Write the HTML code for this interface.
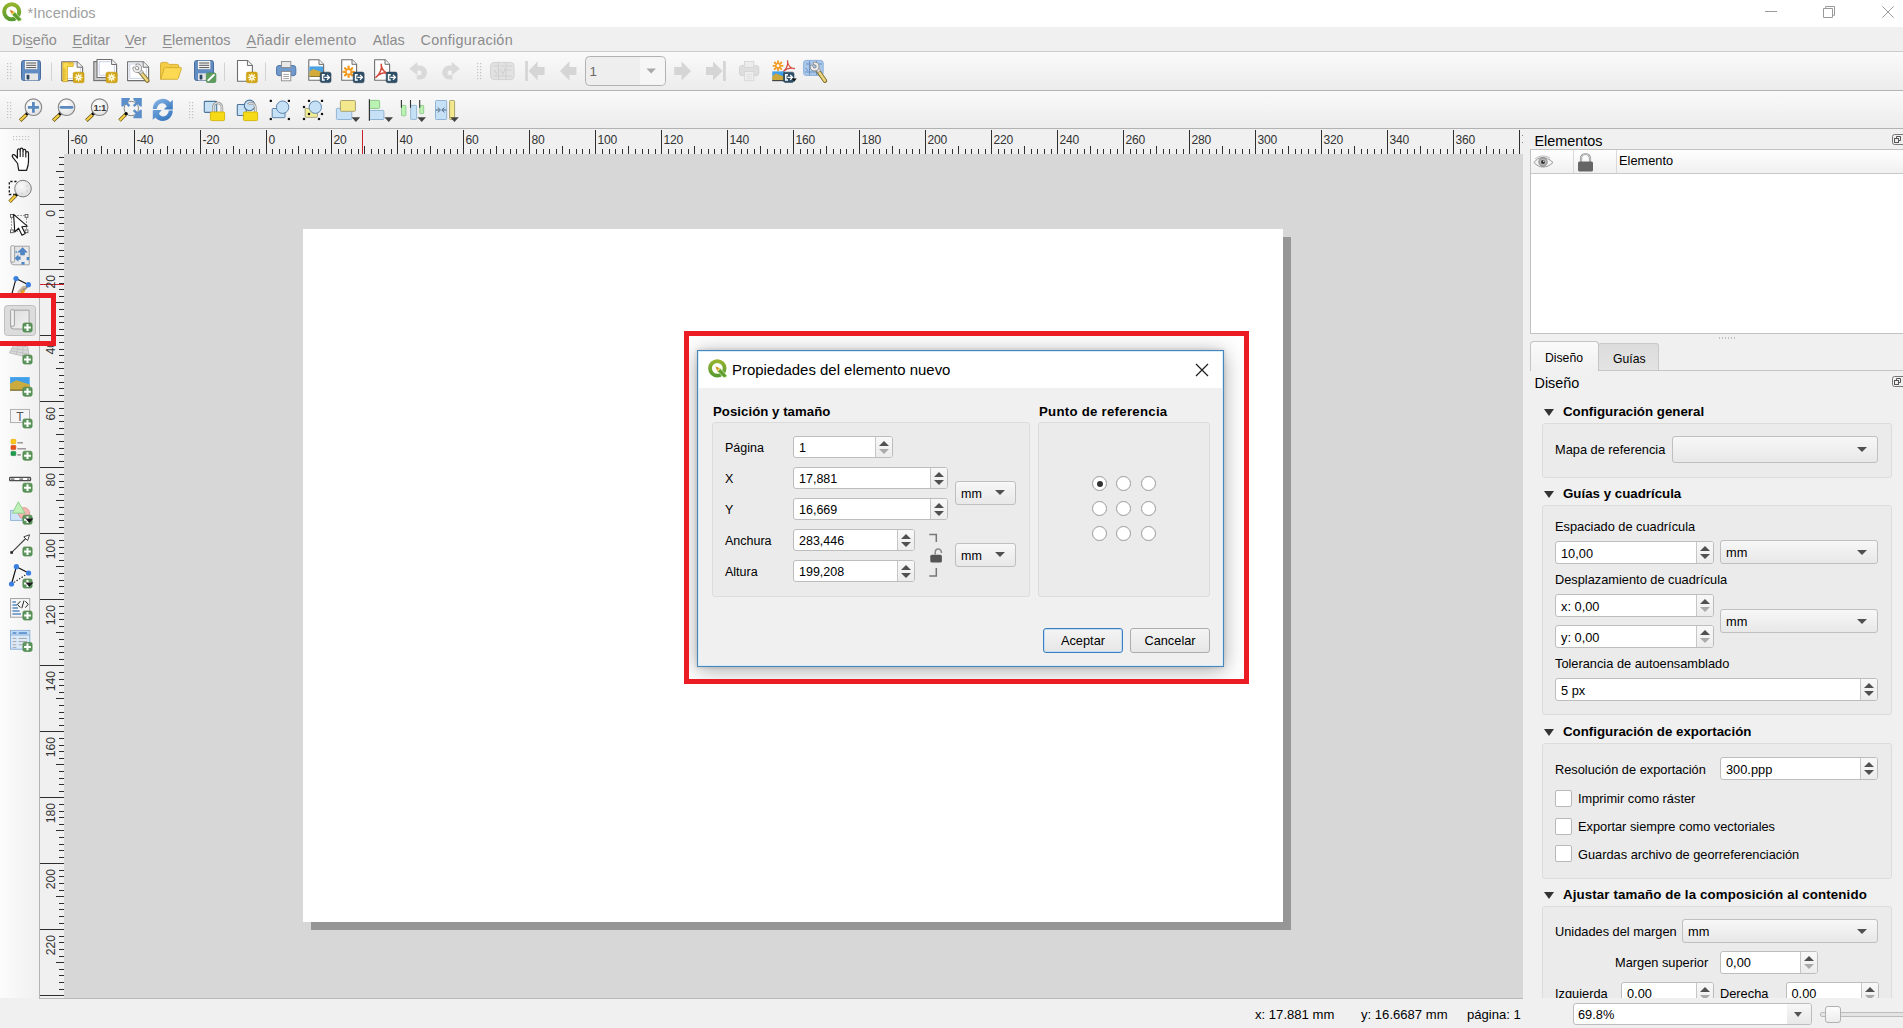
<!DOCTYPE html>
<html lang="es">
<head>
<meta charset="utf-8">
<title>*Incendios</title>
<style>
*{box-sizing:border-box;margin:0;padding:0}
html,body{width:1903px;height:1028px;overflow:hidden;background:#f0f0f0;font-family:"Liberation Sans",sans-serif;font-size:13px;color:#000}
.abs{position:absolute}
#app{position:relative;width:1903px;height:1028px;overflow:hidden}
#titlebar{left:0;top:0;width:1903px;height:27px;background:#fff}
#title{left:27.5px;top:3px;font-size:14.6px;line-height:20px;color:#a0a0a0;white-space:nowrap}
#menubar{left:0;top:27px;width:1903px;height:24px;background:#f0f0f0}
.mi{position:absolute;top:30.5px;font-size:14.4px;line-height:19px;color:#8c8c8c;white-space:nowrap}
.mi u{text-decoration:underline;text-underline-offset:2px;text-decoration-thickness:1px}
.tb{left:0;width:1903px;background:linear-gradient(#fafafa,#ececec)}
#tb1{top:51px;height:40px;border-top:1px solid #cbcbcb;border-bottom:1px solid #b5b5b5}
#tb2{top:91px;height:38px;border-bottom:1px solid #b2b2b2}
.ico{position:absolute;width:24px;height:24px;overflow:visible}
.hdl{position:absolute;width:5px;background-image:radial-gradient(circle,#b9b9b9 0.7px,transparent 1px);background-size:3px 3px}
.vsep{position:absolute;width:1px;background:#d0d0d0}
#ltb{left:0;top:129px;width:39px;height:869px;background:linear-gradient(90deg,#fcfcfc,#f0f0f0)}
#lsep{left:39px;top:129px;width:1px;height:869px;background:#b4b4b4}
#canvas{left:64px;top:154px;width:1459px;height:844px;background:#d7d7d7}
#pshadow{left:311px;top:237px;width:980px;height:693px;background:#969696}
#page{left:303px;top:229px;width:980px;height:693px;background:#fff}
#hruler{left:40px;top:129px;width:1483px;height:25px;background:#f0f0f0}
#vruler{left:40px;top:154px;width:24px;height:844px;background:#f0f0f0}
.rl{position:absolute;font-size:12.1px;letter-spacing:-.25px;line-height:12px;color:#333;white-space:nowrap}
.rlv{position:absolute;font-size:12.2px;line-height:12px;color:#333;white-space:nowrap;transform-origin:0 0;transform:rotate(-90deg)}
#status{left:0;top:998px;width:1903px;height:30px;background:#f0f0f0}
.st{position:absolute;top:1007px;font-size:12.6px;line-height:16px;white-space:nowrap;color:#000}
.red{position:absolute;border:5px solid #ec1c24}
</style>
</head>
<body>
<div id="app">
<div class="abs" id="titlebar"></div>
<div class="abs" id="title">*Incendios</div>
<svg class="abs" style="left:0px;top:0px" width="24" height="24" viewBox="0 0 24 24"><defs><linearGradient id="qg1" x1="0" y1="0" x2="0" y2="1"><stop offset="0" stop-color="#93b32e"/><stop offset="1" stop-color="#579a2f"/></linearGradient></defs><circle cx="11.7" cy="11.75" r="7.55" fill="none" stroke="url(#qg1)" stroke-width="3.9"/><path d="M10 10L14.8 12L21.3 18.8V20.5L18.4 21.3L12 14.8Z" fill="#5d9b30" stroke="#d6f3ae" stroke-width=".8" stroke-linejoin="round"/><path d="M13.4 11.4L14.9 12.3L12.3 14.9L11.4 13.4Z" fill="#f4d262"/><path d="M9.9 9.9L13.5 11.3L11.3 13.5Z" fill="#e67f22"/></svg>
<svg class="abs" style="left:1760px;top:0" width="143" height="27" viewBox="1760 0 143 27"><path d="M1765 11.5H1777M1823.5 8.5H1832.5V17.5H1823.5ZM1825.7 8.3V6.5H1834.5V15.3H1832.7M1882.3 6.3L1893.7 17.7M1893.7 6.3L1882.3 17.7" fill="none" stroke="#9a9a9a" stroke-width="1"/></svg>
<div class="abs" id="menubar"></div>
<div class="mi" style="left:12px">Di<u>s</u>eño</div>
<div class="mi" style="left:72.4px"><u>E</u>ditar</div>
<div class="mi" style="left:125px"><u>V</u>er</div>
<div class="mi" style="left:162.5px"><u>E</u>lementos</div>
<div class="mi" style="left:246.5px;letter-spacing:0.35px"><u>A</u>ñadir elemento</div>
<div class="mi" style="left:372.7px">Atlas</div>
<div class="mi" style="left:420.5px;letter-spacing:0.28px">Configuración</div>
<div class="abs tb" id="tb1"></div>
<div class="abs tb" id="tb2"></div>
<div class="abs" id="ltb"></div>
<div class="abs" id="lsep"></div>
<div class="abs" id="canvas"></div>
<div class="abs" id="pshadow"></div>
<div class="abs" id="page"></div>
<div class="abs" id="hruler"></div>
<div class="abs" id="vruler"></div>
<div class="abs" style="left:39px;top:998px;width:1484px;height:1px;background:#b9b9b9"></div>
<svg class="abs" style="left:0;top:0" width="1903" height="1028" shape-rendering="crispEdges"><path d="M68.5 130V154M74.5 149V154M81.5 149V154M87.5 149V154M94.5 149V154M101.5 146V154M107.5 149V154M114.5 149V154M120.5 149V154M127.5 149V154M134.5 130V154M140.5 149V154M147.5 149V154M153.5 149V154M160.5 149V154M167.5 146V154M173.5 149V154M180.5 149V154M186.5 149V154M193.5 149V154M200.5 130V154M206.5 149V154M213.5 149V154M219.5 149V154M226.5 149V154M233.5 146V154M239.5 149V154M246.5 149V154M252.5 149V154M259.5 149V154M266.5 130V154M272.5 149V154M279.5 149V154M285.5 149V154M292.5 149V154M298.5 146V154M305.5 149V154M312.5 149V154M318.5 149V154M325.5 149V154M331.5 130V154M338.5 149V154M345.5 149V154M351.5 149V154M358.5 149V154M364.5 146V154M371.5 149V154M378.5 149V154M384.5 149V154M391.5 149V154M397.5 130V154M404.5 149V154M411.5 149V154M417.5 149V154M424.5 149V154M430.5 146V154M437.5 149V154M444.5 149V154M450.5 149V154M457.5 149V154M463.5 130V154M470.5 149V154M477.5 149V154M483.5 149V154M490.5 149V154M496.5 146V154M503.5 149V154M510.5 149V154M516.5 149V154M523.5 149V154M529.5 130V154M536.5 149V154M543.5 149V154M549.5 149V154M556.5 149V154M562.5 146V154M569.5 149V154M576.5 149V154M582.5 149V154M589.5 149V154M595.5 130V154M602.5 149V154M609.5 149V154M615.5 149V154M622.5 149V154M628.5 146V154M635.5 149V154M642.5 149V154M648.5 149V154M655.5 149V154M661.5 130V154M668.5 149V154M675.5 149V154M681.5 149V154M688.5 149V154M694.5 146V154M701.5 149V154M708.5 149V154M714.5 149V154M721.5 149V154M727.5 130V154M734.5 149V154M741.5 149V154M747.5 149V154M754.5 149V154M760.5 146V154M767.5 149V154M774.5 149V154M780.5 149V154M787.5 149V154M793.5 130V154M800.5 149V154M807.5 149V154M813.5 149V154M820.5 149V154M826.5 146V154M833.5 149V154M840.5 149V154M846.5 149V154M853.5 149V154M859.5 130V154M866.5 149V154M873.5 149V154M879.5 149V154M886.5 149V154M892.5 146V154M899.5 149V154M906.5 149V154M912.5 149V154M919.5 149V154M925.5 130V154M932.5 149V154M938.5 149V154M945.5 149V154M952.5 149V154M958.5 146V154M965.5 149V154M971.5 149V154M978.5 149V154M985.5 149V154M991.5 130V154M998.5 149V154M1004.5 149V154M1011.5 149V154M1018.5 149V154M1024.5 146V154M1031.5 149V154M1037.5 149V154M1044.5 149V154M1051.5 149V154M1057.5 130V154M1064.5 149V154M1070.5 149V154M1077.5 149V154M1084.5 149V154M1090.5 146V154M1097.5 149V154M1103.5 149V154M1110.5 149V154M1117.5 149V154M1123.5 130V154M1130.5 149V154M1136.5 149V154M1143.5 149V154M1150.5 149V154M1156.5 146V154M1163.5 149V154M1169.5 149V154M1176.5 149V154M1183.5 149V154M1189.5 130V154M1196.5 149V154M1202.5 149V154M1209.5 149V154M1216.5 149V154M1222.5 146V154M1229.5 149V154M1235.5 149V154M1242.5 149V154M1249.5 149V154M1255.5 130V154M1262.5 149V154M1268.5 149V154M1275.5 149V154M1282.5 149V154M1288.5 146V154M1295.5 149V154M1301.5 149V154M1308.5 149V154M1315.5 149V154M1321.5 130V154M1328.5 149V154M1334.5 149V154M1341.5 149V154M1348.5 149V154M1354.5 146V154M1361.5 149V154M1367.5 149V154M1374.5 149V154M1381.5 149V154M1387.5 130V154M1394.5 149V154M1400.5 149V154M1407.5 149V154M1414.5 149V154M1420.5 146V154M1427.5 149V154M1433.5 149V154M1440.5 149V154M1447.5 149V154M1453.5 130V154M1460.5 149V154M1466.5 149V154M1473.5 149V154M1480.5 149V154M1486.5 146V154M1493.5 149V154M1499.5 149V154M1506.5 149V154M1513.5 149V154M1519.5 130V154M59 157.5H64M59 164.5H64M56 171.5H64M59 177.5H64M59 184.5H64M59 190.5H64M59 197.5H64M40 204.5H64M59 210.5H64M59 217.5H64M59 223.5H64M59 230.5H64M56 236.5H64M59 243.5H64M59 250.5H64M59 256.5H64M59 263.5H64M40 269.5H64M59 276.5H64M59 283.5H64M59 289.5H64M59 296.5H64M56 302.5H64M59 309.5H64M59 316.5H64M59 322.5H64M59 329.5H64M40 335.5H64M59 342.5H64M59 349.5H64M59 355.5H64M59 362.5H64M56 368.5H64M59 375.5H64M59 382.5H64M59 388.5H64M59 395.5H64M40 401.5H64M59 408.5H64M59 415.5H64M59 421.5H64M59 428.5H64M56 434.5H64M59 441.5H64M59 448.5H64M59 454.5H64M59 461.5H64M40 467.5H64M59 474.5H64M59 481.5H64M59 487.5H64M59 494.5H64M56 500.5H64M59 507.5H64M59 514.5H64M59 520.5H64M59 527.5H64M40 533.5H64M59 540.5H64M59 547.5H64M59 553.5H64M59 560.5H64M56 566.5H64M59 573.5H64M59 580.5H64M59 586.5H64M59 593.5H64M40 599.5H64M59 606.5H64M59 613.5H64M59 619.5H64M59 626.5H64M56 632.5H64M59 639.5H64M59 646.5H64M59 652.5H64M59 659.5H64M40 665.5H64M59 672.5H64M59 679.5H64M59 685.5H64M59 692.5H64M56 698.5H64M59 705.5H64M59 712.5H64M59 718.5H64M59 725.5H64M40 731.5H64M59 738.5H64M59 745.5H64M59 751.5H64M59 758.5H64M56 764.5H64M59 771.5H64M59 778.5H64M59 784.5H64M59 791.5H64M40 797.5H64M59 804.5H64M59 811.5H64M59 817.5H64M59 824.5H64M56 830.5H64M59 837.5H64M59 844.5H64M59 850.5H64M59 857.5H64M40 863.5H64M59 870.5H64M59 876.5H64M59 883.5H64M59 890.5H64M56 896.5H64M59 903.5H64M59 909.5H64M59 916.5H64M59 923.5H64M40 929.5H64M59 936.5H64M59 942.5H64M59 949.5H64M59 956.5H64M56 962.5H64M59 969.5H64M59 975.5H64M59 982.5H64M59 989.5H64M40 995.5H64" stroke="#2e2e2e" stroke-width="1" fill="none"/><path d="M362.5 130V154M40 284.5H64" stroke="#c9242c" stroke-width="1"/></svg>
<div class="rl" style="left:70.5px;top:133.6px">-60</div>
<div class="rl" style="left:136.5px;top:133.6px">-40</div>
<div class="rl" style="left:202.5px;top:133.6px">-20</div>
<div class="rl" style="left:268.5px;top:133.6px">0</div>
<div class="rl" style="left:333.5px;top:133.6px">20</div>
<div class="rl" style="left:399.5px;top:133.6px">40</div>
<div class="rl" style="left:465.5px;top:133.6px">60</div>
<div class="rl" style="left:531.5px;top:133.6px">80</div>
<div class="rl" style="left:597.5px;top:133.6px">100</div>
<div class="rl" style="left:663.5px;top:133.6px">120</div>
<div class="rl" style="left:729.5px;top:133.6px">140</div>
<div class="rl" style="left:795.5px;top:133.6px">160</div>
<div class="rl" style="left:861.5px;top:133.6px">180</div>
<div class="rl" style="left:927.5px;top:133.6px">200</div>
<div class="rl" style="left:993.5px;top:133.6px">220</div>
<div class="rl" style="left:1059.5px;top:133.6px">240</div>
<div class="rl" style="left:1125.5px;top:133.6px">260</div>
<div class="rl" style="left:1191.5px;top:133.6px">280</div>
<div class="rl" style="left:1257.5px;top:133.6px">300</div>
<div class="rl" style="left:1323.5px;top:133.6px">320</div>
<div class="rl" style="left:1389.5px;top:133.6px">340</div>
<div class="rl" style="left:1455.5px;top:133.6px">360</div>
<div class="rlv" style="left:44.5px;top:209.7px"><span style="position:absolute;right:0;top:0">0</span></div>
<div class="rlv" style="left:44.5px;top:274.7px"><span style="position:absolute;right:0;top:0">20</span></div>
<div class="rlv" style="left:44.5px;top:340.7px"><span style="position:absolute;right:0;top:0">40</span></div>
<div class="rlv" style="left:44.5px;top:406.7px"><span style="position:absolute;right:0;top:0">60</span></div>
<div class="rlv" style="left:44.5px;top:472.7px"><span style="position:absolute;right:0;top:0">80</span></div>
<div class="rlv" style="left:44.5px;top:538.7px"><span style="position:absolute;right:0;top:0">100</span></div>
<div class="rlv" style="left:44.5px;top:604.7px"><span style="position:absolute;right:0;top:0">120</span></div>
<div class="rlv" style="left:44.5px;top:670.7px"><span style="position:absolute;right:0;top:0">140</span></div>
<div class="rlv" style="left:44.5px;top:736.7px"><span style="position:absolute;right:0;top:0">160</span></div>
<div class="rlv" style="left:44.5px;top:802.7px"><span style="position:absolute;right:0;top:0">180</span></div>
<div class="rlv" style="left:44.5px;top:868.7px"><span style="position:absolute;right:0;top:0">200</span></div>
<div class="rlv" style="left:44.5px;top:934.7px"><span style="position:absolute;right:0;top:0">220</span></div>
<div class="rlv" style="left:44.5px;top:1000.7px"><span style="position:absolute;right:0;top:0">240</span></div>
<svg class="abs" style="left:0;top:0" width="900" height="129" viewBox="0 0 900 129"><defs><radialGradient id="lg" cx=".4" cy=".35" r=".75"><stop offset="0" stop-color="#fff"/><stop offset="1" stop-color="#dedede"/></radialGradient><linearGradient id="rf" x1="0" y1="0" x2="1" y2="1"><stop offset="0" stop-color="#8ebbe8"/><stop offset="1" stop-color="#3a78bf"/></linearGradient><linearGradient id="rf2" x1="0" y1="0" x2="1" y2="1"><stop offset="0" stop-color="#2f6fb8"/><stop offset="1" stop-color="#6aa2dc"/></linearGradient></defs><rect x="7" y="63" width="1.2" height="1.2" fill="#c2c2c2"/><rect x="10" y="63" width="1.2" height="1.2" fill="#c2c2c2"/><rect x="7" y="66" width="1.2" height="1.2" fill="#c2c2c2"/><rect x="10" y="66" width="1.2" height="1.2" fill="#c2c2c2"/><rect x="7" y="69" width="1.2" height="1.2" fill="#c2c2c2"/><rect x="10" y="69" width="1.2" height="1.2" fill="#c2c2c2"/><rect x="7" y="72" width="1.2" height="1.2" fill="#c2c2c2"/><rect x="10" y="72" width="1.2" height="1.2" fill="#c2c2c2"/><rect x="7" y="75" width="1.2" height="1.2" fill="#c2c2c2"/><rect x="10" y="75" width="1.2" height="1.2" fill="#c2c2c2"/><rect x="7" y="78" width="1.2" height="1.2" fill="#c2c2c2"/><rect x="10" y="78" width="1.2" height="1.2" fill="#c2c2c2"/><rect x="21.5" y="60.5" width="19" height="20" rx="2.2" fill="#5f8dc3" stroke="#486c9e"/><rect x="24.6" y="60.6" width="13.2" height="9" fill="#f4f4f4" stroke="#486c9e" stroke-width=".5"/><path d="M26.2 63h10M26.2 65.3h10M26.2 67.6h10" stroke="#555" stroke-width="1"/><rect x="25" y="73.4" width="13" height="7" fill="#e6e6e6"/><rect x="26.6" y="74.8" width="2.8" height="4.6" rx=".6" fill="#2c4666"/><path d="M51.5 62.5V81" stroke="#d2d2d2"/><path d="M61.7 61.7H77.1L82.6 67.2V80.6H61.7Z" fill="#fff" stroke="#6e6e6e" stroke-width="1.1" stroke-linejoin="round"/><path d="M77.1 61.7V67.2H82.6" fill="#f2f2f2" stroke="#6e6e6e" stroke-width="1" stroke-linejoin="round"/><path d="M63.900000000000006 63.900000000000006H76.1M80.39999999999999 68.2V78.39999999999999H63.900000000000006V63.900000000000006" fill="none" stroke="#c3cde9" stroke-width=".9"/><path d="M62.8 62.6H73.2V66.4H67.4V81.6H62.8Z" fill="#fbdc50" stroke="#d2a41c" stroke-width=".8"/><path d="M63 69h2.4M63 71h3M63 73h2.4M63 75h3M63 77h2.4M63 79h3M69 63v1.6M71 63v1.6" stroke="#c79a18" stroke-width=".7"/><rect x="73.2" y="72.2" width="10.8" height="10.5" rx="1.6" fill="#d2a616" stroke="#c2960c" stroke-width=".6"/><path d="M74.6 77.5H82.6M78.6 73.5V81.5M75.7 74.5L81.5 80.4M81.5 74.5L75.7 80.4" stroke="#fff6c8" stroke-width="1.3"/><circle cx="78.6" cy="77.5" r="2.3" fill="#fffbe6"/><circle cx="78.6" cy="77.5" r=".8" fill="#d2b24a"/><rect x="93.8" y="61.6" width="18.6" height="19" fill="#cacaca" stroke="#6e6e6e" stroke-width="1.1"/><path d="M97 59.5H111.6L116.6 64.5V77.5H97Z" fill="#fff" stroke="#6e6e6e" stroke-width="1.1" stroke-linejoin="round"/><path d="M111.6 59.5V64.5H116.6" fill="#f2f2f2" stroke="#6e6e6e" stroke-width="1" stroke-linejoin="round"/><path d="M99.2 61.7H110.6M114.39999999999999 65.5V75.3H99.2V61.7" fill="none" stroke="#c3cde9" stroke-width=".9"/><rect x="106.0" y="72.2" width="11.2" height="10.5" rx="1.6" fill="#d2a616" stroke="#c2960c" stroke-width=".6"/><path d="M107.6 77.5H115.6M111.6 73.5V81.5M108.7 74.5L114.5 80.4M114.5 74.5L108.7 80.4" stroke="#fff6c8" stroke-width="1.3"/><circle cx="111.6" cy="77.5" r="2.3" fill="#fffbe6"/><circle cx="111.6" cy="77.5" r=".8" fill="#d2b24a"/><path d="M127.6 61.7H143.1L148.6 67.2V80.6H127.6Z" fill="#fff" stroke="#6e6e6e" stroke-width="1.1" stroke-linejoin="round"/><path d="M143.1 61.7V67.2H148.6" fill="#f2f2f2" stroke="#6e6e6e" stroke-width="1" stroke-linejoin="round"/><path d="M129.79999999999998 63.900000000000006H142.1M146.4 68.2V78.39999999999999H129.79999999999998V63.900000000000006" fill="none" stroke="#c3cde9" stroke-width=".9"/><path d="M139.39999999999998 70.8L147.4 80.6" stroke="#7c6a28" stroke-width="4.4" stroke-linecap="round"/><path d="M139.79999999999998 71.2L147.20000000000002 80.39999999999999" stroke="#ead47e" stroke-width="2.6" stroke-linecap="round"/><path d="M138.6 72.2L141.2 69.60000000000001L143.39999999999998 71.8L140.79999999999998 74.4Z" fill="#d6d6d6" stroke="#8c8c8c" stroke-width=".7"/><path d="M137.2 65.2A3 3 0 1 1 134.2 68.2" fill="none" stroke="#858585" stroke-width="3.6" stroke-linecap="round"/><path d="M137.2 65.2A3 3 0 1 1 134.2 68.2" fill="none" stroke="#ececec" stroke-width="2" stroke-linecap="round"/><path d="M160.5 79V64.2q0-1.8 1.8-1.8h4.2q.9 0 1.5.8l1 1.2h8.2q1.6 0 1.6 1.6v2Z" fill="#f4cc44" stroke="#d3aa30" stroke-width=".9" stroke-linejoin="round"/><path d="M160.7 79.3L164.2 68.4q.3-.8 1.2-.8H180.6q1.1 0 .8 1L178.2 78.5q-.3.8-1.2.8Z" fill="#fcd952" stroke="#d3aa30" stroke-width=".9" stroke-linejoin="round"/><rect x="194.5" y="60.5" width="19" height="20" rx="2.2" fill="#5f8dc3" stroke="#486c9e"/><rect x="197.6" y="60.6" width="13.2" height="9" fill="#f4f4f4" stroke="#486c9e" stroke-width=".5"/><path d="M199.2 63h10M199.2 65.3h10M199.2 67.6h10" stroke="#555" stroke-width="1"/><rect x="198" y="73.4" width="13" height="7" fill="#e6e6e6"/><rect x="199.6" y="74.8" width="2.8" height="4.6" rx=".6" fill="#2c4666"/><rect x="206.3" y="72.9" width="9.6" height="9.6" rx="1.6" fill="#5d9d5d" stroke="#4a864a" stroke-width=".7"/><path d="M208.3 80.4L213.8 75" stroke="#fff" stroke-width="2" stroke-linecap="round"/><path d="M224.5 62.5V81" stroke="#d2d2d2"/><path d="M237.5 60.5H247.4L252.4 65.5V81.2H237.5Z" fill="#fff" stroke="#6e6e6e" stroke-width="1.1" stroke-linejoin="round"/><path d="M247.4 60.5V65.5H252.4" fill="#f2f2f2" stroke="#6e6e6e" stroke-width="1" stroke-linejoin="round"/><rect x="246.4" y="72.1" width="10.9" height="10.6" rx="1.6" fill="#d2a616" stroke="#c2960c" stroke-width=".6"/><path d="M247.8 77.4H255.8M251.8 73.4V81.4M248.9 74.5L254.8 80.3M254.8 74.5L248.9 80.3" stroke="#fff6c8" stroke-width="1.3"/><circle cx="251.8" cy="77.4" r="2.3" fill="#fffbe6"/><circle cx="251.8" cy="77.4" r=".8" fill="#d2b24a"/><path d="M265.5 62.5V81" stroke="#d2d2d2"/><rect x="276.5" y="65.5" width="19.3" height="10.2" rx="2.6" fill="#7099cb" stroke="#4f77a8"/><rect x="281.4" y="61.5" width="9.4" height="6" fill="#e8e8e8" stroke="#8a8a8a" stroke-width=".9"/><rect x="281.4" y="71.5" width="9.4" height="9.3" fill="#fff" stroke="#8a8a8a" stroke-width=".9"/><path d="M283.2 74.4h5.8M283.2 76.5h5.8M283.2 78.6h5.8" stroke="#9a9a9a" stroke-width=".9"/><path d="M308.8 59.8H319.0L323.6 64.39999999999999V80.3H308.8Z" fill="#fff" stroke="#6e6e6e" stroke-width="1.1" stroke-linejoin="round"/><path d="M319.0 59.8V64.39999999999999H323.6" fill="#f2f2f2" stroke="#6e6e6e" stroke-width="1" stroke-linejoin="round"/><rect x="309.4" y="66.4" width="13.6" height="10" fill="#48a4e7"/><path d="M309.4 76.4V71.6L313.2 68.9L323 72.6V76.4Z" fill="#d3ab3a"/><path d="M309.4 76V76.8H323V76Z" fill="#7a6a20"/><rect x="320.2" y="72.2" width="10.8" height="10.4" rx="1.8" fill="#2f5068" stroke="#274357" stroke-width=".6"/><path d="M324.8 74.8h-2.2v5.2h2.2" fill="none" stroke="#fff" stroke-width="1.5"/><path d="M324.2 77.4H329.2M327.0 75.0L329.4 77.4L327.0 79.8" fill="none" stroke="#fff" stroke-width="1.3"/><path d="M341.7 59.7H352.0L356.6 64.3V80.2H341.7Z" fill="#fff" stroke="#6e6e6e" stroke-width="1.1" stroke-linejoin="round"/><path d="M352.0 59.7V64.3H356.6" fill="#f2f2f2" stroke="#6e6e6e" stroke-width="1" stroke-linejoin="round"/><path d="M343.5 71.8L353.7 71.8M345.0 68.2L352.2 75.4M348.6 66.7L348.6 76.9M352.2 68.2L345.0 75.4" stroke="#f39a1e" stroke-width="2.3" stroke-linecap="round"/><circle cx="348.6" cy="71.8" r="1.8399999999999999" fill="#fff"/><rect x="353.2" y="72.1" width="10.9" height="10.6" rx="1.8" fill="#2f5068" stroke="#274357" stroke-width=".6"/><path d="M357.8 74.7h-2.2v5.2h2.2" fill="none" stroke="#fff" stroke-width="1.5"/><path d="M357.2 77.3H362.2M360.0 74.9L362.4 77.3L360.0 79.7" fill="none" stroke="#fff" stroke-width="1.3"/><path d="M374.6 59.7H385.0L389.6 64.3V80.2H374.6Z" fill="#fff" stroke="#6e6e6e" stroke-width="1.1" stroke-linejoin="round"/><path d="M385.0 59.7V64.3H389.6" fill="#f2f2f2" stroke="#6e6e6e" stroke-width="1" stroke-linejoin="round"/><g transform="translate(381.3,64.3) scale(1)"><path d="M0 0C0.8 5 -2 10 -5.5 13.2M-0.2 0.5C0.5 5.5 4 9 8 9.3M-5.2 12.8C-2 9.5 3 8 7.8 8.8" fill="none" stroke="#d3493a" stroke-width="1.5" stroke-linecap="round"/></g><rect x="386.2" y="72.1" width="10.9" height="10.6" rx="1.8" fill="#2f5068" stroke="#274357" stroke-width=".6"/><path d="M390.8 74.7h-2.2v5.2h2.2" fill="none" stroke="#fff" stroke-width="1.5"/><path d="M390.2 77.3H395.2M393.0 74.9L395.4 77.3L393.0 79.7" fill="none" stroke="#fff" stroke-width="1.3"/><path d="M409.3 68.7L417.4 62V65.6H420A7 7 0 0 1 420 79.6H416.8V75.2H419.4A2.3 2.3 0 0 0 419.4 70.6H417.4V75.3Z" fill="#d9d9d9"/><path d="M409.3 68.7L417.4 62V65.6H420A7 7 0 0 1 420 79.6H416.8V75.2H419.4A2.3 2.3 0 0 0 419.4 70.6H417.4V75.3Z" fill="#d9d9d9" transform="translate(869.2,0) scale(-1,1)"/><rect x="477" y="63" width="1.2" height="1.2" fill="#c2c2c2"/><rect x="480" y="63" width="1.2" height="1.2" fill="#c2c2c2"/><rect x="477" y="66" width="1.2" height="1.2" fill="#c2c2c2"/><rect x="480" y="66" width="1.2" height="1.2" fill="#c2c2c2"/><rect x="477" y="69" width="1.2" height="1.2" fill="#c2c2c2"/><rect x="480" y="69" width="1.2" height="1.2" fill="#c2c2c2"/><rect x="477" y="72" width="1.2" height="1.2" fill="#c2c2c2"/><rect x="480" y="72" width="1.2" height="1.2" fill="#c2c2c2"/><rect x="477" y="75" width="1.2" height="1.2" fill="#c2c2c2"/><rect x="480" y="75" width="1.2" height="1.2" fill="#c2c2c2"/><rect x="477" y="78" width="1.2" height="1.2" fill="#c2c2c2"/><rect x="480" y="78" width="1.2" height="1.2" fill="#c2c2c2"/><rect x="490.6" y="62.4" width="23.4" height="17.2" rx="3.6" fill="#e2e2e2" stroke="#d2d2d2"/><path d="M493 66h6M501 66h4M507 66h5M494 70l3 4M500 69l3 5 2-5M507 70h4M493 76h19M498.5 63v16M506 63v16" stroke="#d0d0d0" stroke-width="1.2" fill="none"/><rect x="525.2" y="61" width="2.7" height="20" fill="#d5d5d5"/><path d="M528.6 71L537.6 61.4V67H544.6V75H537.6V80.6Z" fill="#d5d5d5"/><path d="M560 71L569.4 61.4V67H576.4V75H569.4V80.6Z" fill="#d5d5d5"/><rect x="585.5" y="56.5" width="80" height="29" rx="4" fill="#eeeeee" stroke="#b2b2b2"/><path d="M640 57.2H661.5Q664.8 57.2 664.8 60.5V81.5Q664.8 84.8 661.5 84.8H640Z" fill="#f6f6f6"/><path d="M646.5 68.6h9.4l-4.7 4.8z" fill="#a9a9a9"/><text x="589.6" y="76.4" font-family="Liberation Sans, sans-serif" font-size="13.4" fill="#6a6a6a">1</text><path d="M691 71L681.6 61.4V67H674.2V75H681.6V80.6Z" fill="#d5d5d5"/><path d="M722.6 71L713 61.4V67H706V75H713V80.6Z" fill="#d5d5d5"/><rect x="723" y="61" width="2.8" height="20" fill="#d5d5d5"/><rect x="739.5" y="65.5" width="19.3" height="10.2" rx="2.6" fill="#dedede" stroke="#d4d4d4"/><rect x="744.4" y="61.5" width="9.4" height="6" fill="#ececec" stroke="#d6d6d6" stroke-width=".9"/><rect x="744.4" y="71.5" width="9.4" height="9.3" fill="#efefef" stroke="#d6d6d6" stroke-width=".9"/><path d="M746.2 74.4h5.8M746.2 76.5h5.8M746.2 78.6h5.8" stroke="#dcdcdc" stroke-width=".9"/><path d="M773.4 65.8L782.6 65.8M774.7 62.5L781.3 69.1M778.0 61.2L778.0 70.4M781.3 62.5L774.7 69.1" stroke="#f39a1e" stroke-width="1.8" stroke-linecap="round"/><circle cx="778" cy="65.8" r="1.4400000000000002" fill="#fff"/><g transform="translate(787.6,60.8) scale(0.85)"><path d="M0 0C0.8 5 -2 10 -5.5 13.2M-0.2 0.5C0.5 5.5 4 9 8 9.3M-5.2 12.8C-2 9.5 3 8 7.8 8.8" fill="none" stroke="#d3493a" stroke-width="1.5" stroke-linecap="round"/></g><rect x="772.3" y="71.4" width="12.6" height="9.6" fill="#409fe8"/><path d="M772.3 81V76L776 73.5L784.9 77V81Z" fill="#caa83c"/><rect x="772.3" y="80" width="12.6" height="1.2" fill="#444"/><rect x="783.4" y="72.2" width="10.6" height="10.2" rx="1.8" fill="#2f5068" stroke="#274357" stroke-width=".6"/><path d="M788.0 74.8h-2.2v5.2h2.2" fill="none" stroke="#fff" stroke-width="1.5"/><path d="M787.4 77.4H792.4M790.2 75.0L792.6 77.4L790.2 79.8" fill="none" stroke="#fff" stroke-width="1.3"/><path d="M791.8 78.6h5l-2.5 3z" fill="#111"/><rect x="803.6" y="60.4" width="19.6" height="15" rx="2.6" fill="#aac7e9" stroke="#8db0da"/><path d="M806 64h5M813 64h3M818 64h4M806 68l2 3M817 67v4M805 72h17M809.5 61v14M816.5 61v14" stroke="#6d93c4" stroke-width="1" fill="none"/><path d="M816.8000000000001 69.19999999999999L825 80.8" stroke="#7c6a28" stroke-width="4.4" stroke-linecap="round"/><path d="M817.2 69.6L824.8 80.6" stroke="#ead47e" stroke-width="2.6" stroke-linecap="round"/><path d="M816.0 70.6L818.6 68.0L820.8000000000001 70.19999999999999L818.2 72.8Z" fill="#d6d6d6" stroke="#8c8c8c" stroke-width=".7"/><path d="M814.6 63.599999999999994A3 3 0 1 1 811.6 66.6" fill="none" stroke="#858585" stroke-width="3.6" stroke-linecap="round"/><path d="M814.6 63.599999999999994A3 3 0 1 1 811.6 66.6" fill="none" stroke="#ececec" stroke-width="2" stroke-linecap="round"/><rect x="7" y="102" width="1.2" height="1.2" fill="#c2c2c2"/><rect x="10" y="102" width="1.2" height="1.2" fill="#c2c2c2"/><rect x="7" y="105" width="1.2" height="1.2" fill="#c2c2c2"/><rect x="10" y="105" width="1.2" height="1.2" fill="#c2c2c2"/><rect x="7" y="108" width="1.2" height="1.2" fill="#c2c2c2"/><rect x="10" y="108" width="1.2" height="1.2" fill="#c2c2c2"/><rect x="7" y="111" width="1.2" height="1.2" fill="#c2c2c2"/><rect x="10" y="111" width="1.2" height="1.2" fill="#c2c2c2"/><rect x="7" y="114" width="1.2" height="1.2" fill="#c2c2c2"/><rect x="10" y="114" width="1.2" height="1.2" fill="#c2c2c2"/><rect x="7" y="117" width="1.2" height="1.2" fill="#c2c2c2"/><rect x="10" y="117" width="1.2" height="1.2" fill="#c2c2c2"/><path d="M26.5 114.6L20.1 120.6" stroke="#6b5a14" stroke-width="3.5"/><path d="M26.5 114.6L20.4 120.2" stroke="#f9cf45" stroke-width="2.1"/><circle cx="27.0" cy="113.8" r="1.7" fill="#0a0a0a"/><circle cx="33.4" cy="107.2" r="8.3" fill="url(#lg)" stroke="#878787" stroke-width="1.1"/><path d="M27.9 107.3h11M33.4 102v10.7" stroke="#5a89be" stroke-width="2.8"/><path d="M59.6 114.6L53.2 120.6" stroke="#6b5a14" stroke-width="3.5"/><path d="M59.6 114.6L53.6 120.2" stroke="#f9cf45" stroke-width="2.1"/><circle cx="60.1" cy="113.8" r="1.7" fill="#0a0a0a"/><circle cx="66.5" cy="107.2" r="8.3" fill="url(#lg)" stroke="#878787" stroke-width="1.1"/><path d="M61.0 107.3h11" stroke="#5a89be" stroke-width="2.8" stroke-linecap="round"/><path d="M92.7 114.6L86.3 120.6" stroke="#6b5a14" stroke-width="3.5"/><path d="M92.7 114.6L86.6 120.2" stroke="#f9cf45" stroke-width="2.1"/><circle cx="93.2" cy="113.8" r="1.7" fill="#0a0a0a"/><circle cx="99.6" cy="107.2" r="8.3" fill="url(#lg)" stroke="#878787" stroke-width="1.1"/><text x="99.6" y="110.7" text-anchor="middle" font-family="Liberation Sans, sans-serif" font-weight="700" font-size="9.6" letter-spacing="-.5" fill="#3a3a3a">1:1</text><circle cx="131.3" cy="108.5" r="7.2" fill="#f3f3f3" stroke="#777" stroke-width=".9"/><path d="M0 0H8.4V1.7L5.9 4.2L8.9 7.2L7.2 8.9L4.2 5.9L1.7 8.4H0Z" fill="#5b8fcb" transform="translate(121.4,98.1)"/><path d="M0 0H8.4V1.7L5.9 4.2L8.9 7.2L7.2 8.9L4.2 5.9L1.7 8.4H0Z" fill="#5b8fcb" transform="translate(141.8,98.1) scale(-1,1)"/><path d="M0 0H8.4V1.7L5.9 4.2L8.9 7.2L7.2 8.9L4.2 5.9L1.7 8.4H0Z" fill="#5b8fcb" transform="translate(141.8,118.2) scale(-1,-1)"/><path d="M125.6 114.6L119.5 120.5" stroke="#6b5a14" stroke-width="3.5"/><path d="M125.6 114.6L119.8 120.2" stroke="#f9cf45" stroke-width="2.1"/><circle cx="126.1" cy="113.8" r="1.7" fill="#0a0a0a"/><path d="M152.8 109C153 102 158 98.7 163 98.7C166 98.7 168.5 100 170.2 102.2L172.8 99.8V109.5H163.8L166.8 106.2C165.5 104.2 164 103.2 162.5 103.2C159.5 103.2 157.2 105.5 156.8 109Z" fill="url(#rf)"/><path d="M152.8 109C153 102 158 98.7 163 98.7C166 98.7 168.5 100 170.2 102.2L172.8 99.8V109.5H163.8L166.8 106.2C165.5 104.2 164 103.2 162.5 103.2C159.5 103.2 157.2 105.5 156.8 109Z" fill="url(#rf2)" transform="rotate(180 162.8 109.8)"/><rect x="189" y="102" width="1.2" height="1.2" fill="#c2c2c2"/><rect x="192" y="102" width="1.2" height="1.2" fill="#c2c2c2"/><rect x="189" y="105" width="1.2" height="1.2" fill="#c2c2c2"/><rect x="192" y="105" width="1.2" height="1.2" fill="#c2c2c2"/><rect x="189" y="108" width="1.2" height="1.2" fill="#c2c2c2"/><rect x="192" y="108" width="1.2" height="1.2" fill="#c2c2c2"/><rect x="189" y="111" width="1.2" height="1.2" fill="#c2c2c2"/><rect x="192" y="111" width="1.2" height="1.2" fill="#c2c2c2"/><rect x="189" y="114" width="1.2" height="1.2" fill="#c2c2c2"/><rect x="192" y="114" width="1.2" height="1.2" fill="#c2c2c2"/><rect x="189" y="117" width="1.2" height="1.2" fill="#c2c2c2"/><rect x="192" y="117" width="1.2" height="1.2" fill="#c2c2c2"/><rect x="204.3" y="101.4" width="12.4" height="11" rx=".8" fill="#c6e0f6" stroke="#4c7499" stroke-width="1.1"/><path d="M213.3 112.5V107.2a4.3 4.3 0 0 1 8.6 0V112.5" fill="none" stroke="#9a9a9a" stroke-width="2.6"/><path d="M213.3 112.5V107.2a4.3 4.3 0 0 1 8.6 0V112.5" fill="none" stroke="#ececec" stroke-width="1"/><rect x="210.4" y="112" width="14.2" height="8.6" rx="1" fill="#f6da18" stroke="#d3b600" stroke-width=".9"/><rect x="237.3" y="104.5" width="9" height="11" rx=".8" fill="#c6e0f6" stroke="#4c7499" stroke-width="1.1"/><circle cx="249.6" cy="105.4" r="5.3" fill="#c6e0f6" stroke="#4c7499" stroke-width="1.1"/><path d="M255.4 112.5V107.4a4.2 4.2 0 0 0-7.4-2.8" fill="none" stroke="#9a9a9a" stroke-width="2.6"/><path d="M255.4 112.5V107.4a4.2 4.2 0 0 0-7.4-2.8" fill="none" stroke="#ececec" stroke-width="1"/><rect x="243.4" y="112" width="14.2" height="8.6" rx="1" fill="#f6da18" stroke="#d3b600" stroke-width=".9"/><rect x="272.2" y="108.5" width="12.8" height="9.2" rx=".8" fill="#c6e0f6" stroke="#5c86ac" stroke-width="1"/><circle cx="282.6" cy="107.2" r="6.2" fill="#c6e0f6" stroke="#5c86ac" stroke-width="1"/><rect x="269.7" y="99.80000000000001" width="2.2" height="2.2" fill="#111"/><rect x="287.79999999999995" y="99.80000000000001" width="2.2" height="2.2" fill="#111"/><rect x="269.7" y="117.9" width="2.2" height="2.2" fill="#111"/><rect x="287.79999999999995" y="117.9" width="2.2" height="2.2" fill="#111"/><rect x="305.2" y="108.5" width="12.2" height="8.8" rx=".8" fill="#f2ee96" stroke="#a9a57c" stroke-width="1"/><circle cx="315.3" cy="107.2" r="6.2" fill="#c6e0f6" stroke="#5c86ac" stroke-width="1"/><rect x="307.9" y="99.80000000000001" width="2.2" height="2.2" fill="#111"/><rect x="320.9" y="99.80000000000001" width="2.2" height="2.2" fill="#111"/><rect x="302.9" y="105.9" width="2.2" height="2.2" fill="#111"/><rect x="307.9" y="112.9" width="2.2" height="2.2" fill="#111"/><rect x="320.9" y="112.9" width="2.2" height="2.2" fill="#111"/><rect x="302.9" y="117.9" width="2.2" height="2.2" fill="#111"/><rect x="317.9" y="117.9" width="2.2" height="2.2" fill="#111"/><rect x="336.4" y="108.3" width="15.4" height="11.2" rx="1" fill="#c6e0f6" stroke="#8fb4d4" stroke-width="1"/><rect x="340.4" y="100.5" width="15" height="10.8" rx="1" fill="#f3e98c" stroke="#aaa172" stroke-width="1"/><path d="M351.6 117.2h8.6l-4.3 4.8z" fill="#444"/><rect x="369.6" y="100.4" width="10" height="8" rx=".8" fill="#baf2b2" stroke="#8fca8a" stroke-width="1"/><rect x="369.6" y="110.4" width="14.3" height="9.1" rx=".8" fill="#c6e0f6" stroke="#8fb4d4" stroke-width="1"/><path d="M369.4 99.3V120.7" stroke="#333" stroke-width="1.2"/><path d="M384.4 117.2h8.6l-4.3 4.8z" fill="#444"/><rect x="401.5" y="105.4" width="4.4" height="10.4" rx=".6" fill="#baf2b2" stroke="#8fca8a" stroke-width=".9"/><rect x="410.6" y="105.4" width="6" height="14" rx=".6" fill="#c6e0f6" stroke="#8fb4d4" stroke-width=".9"/><rect x="419.8" y="105.4" width="3.9" height="8.2" rx=".6" fill="#baf2b2" stroke="#8fca8a" stroke-width=".9"/><path d="M401.4 100V107.8M410.5 100V107.8M419.7 100V107.8" stroke="#333" stroke-width="1.1"/><path d="M417.4 117.2h8.6l-4.3 4.8z" fill="#444"/><rect x="435.5" y="100.5" width="11.2" height="19" rx=".8" fill="#c6e0f6" stroke="#8fb4d4" stroke-width="1"/><path d="M435.8 110h3.4M446.4 110h-3.4M438 107.6L440.4 110L438 112.4M444.2 107.6L441.8 110L444.2 112.4" stroke="#44607c" stroke-width="1" fill="none"/><rect x="449.6" y="100.5" width="5" height="19" rx=".8" fill="#f3e98c" stroke="#aaa172" stroke-width="1"/><path d="M450.2 117.2h8.6l-4.3 4.8z" fill="#444"/></svg>
<svg class="abs" style="left:0;top:129px" width="40" height="540" viewBox="0 129 40 540"><defs><linearGradient id="sg" x1="0" y1="0" x2="1" y2="1"><stop offset="0" stop-color="#dcdcdc"/><stop offset="1" stop-color="#f2f2f2"/></linearGradient><radialGradient id="lg2" cx=".4" cy=".35" r=".75"><stop offset="0" stop-color="#fafafa"/><stop offset="1" stop-color="#d9d9d9"/></radialGradient></defs><rect x="13" y="136" width="1.2" height="1.2" fill="#c4c4c4"/><rect x="16" y="136" width="1.2" height="1.2" fill="#c4c4c4"/><rect x="19" y="136" width="1.2" height="1.2" fill="#c4c4c4"/><rect x="22" y="136" width="1.2" height="1.2" fill="#c4c4c4"/><rect x="25" y="136" width="1.2" height="1.2" fill="#c4c4c4"/><rect x="28" y="136" width="1.2" height="1.2" fill="#c4c4c4"/><rect x="13" y="139" width="1.2" height="1.2" fill="#c4c4c4"/><rect x="16" y="139" width="1.2" height="1.2" fill="#c4c4c4"/><rect x="19" y="139" width="1.2" height="1.2" fill="#c4c4c4"/><rect x="22" y="139" width="1.2" height="1.2" fill="#c4c4c4"/><rect x="25" y="139" width="1.2" height="1.2" fill="#c4c4c4"/><rect x="28" y="139" width="1.2" height="1.2" fill="#c4c4c4"/><path d="M17.6 163.5L13 157.6Q11.6 155.6 12.8 154.8Q14 154.1 15.4 155.6L17.4 158V150.8Q17.4 148.9 18.8 148.9Q20.2 148.9 20.2 150.8V150Q20.2 148.2 21.6 148.2Q23 148.2 23 150V151Q23 149.4 24.4 149.4Q25.8 149.4 25.8 151V153Q25.8 151.6 27.1 151.6Q28.5 151.6 28.5 153.2V161.5Q28.5 165 26.6 170.3H18.8Q18 166.5 17.6 163.5Z" fill="#fff" stroke="#1a1a1a" stroke-width="1.2" stroke-linejoin="round"/><path d="M20.2 150.8V157M23 151V157M25.8 153V157.4" stroke="#1a1a1a" stroke-width="1.1"/><path d="M16.5 181.5H9.3V194.5H15" fill="none" stroke="#111" stroke-width="1.3" stroke-dasharray="2.2 1.8"/><path d="M16 195.2L9.6 201.8" stroke="#6b5a14" stroke-width="3.4"/><path d="M16 195.2L9.9 201.5" stroke="#f9cf45" stroke-width="2"/><circle cx="16.6" cy="194.6" r="1.6" fill="#0a0a0a"/><circle cx="23" cy="188.6" r="8.3" fill="url(#lg2)" stroke="#7d7d7d" stroke-width="1"/><path d="M27 186v.1M27 191v.1M22 193.5h.1" stroke="#c6c6c6" stroke-width="1.4" stroke-linecap="round"/><path d="M11.5 215.5H26.5V231H11.5Z" fill="none" stroke="#444" stroke-width="1" stroke-dasharray="1 2"/><rect x="10.5" y="214.5" width="2.8" height="2.8" fill="#fff" stroke="#555" stroke-width=".9"/><rect x="25.1" y="214.5" width="2.8" height="2.8" fill="#fff" stroke="#555" stroke-width=".9"/><rect x="10.5" y="229.9" width="2.8" height="2.8" fill="#fff" stroke="#555" stroke-width=".9"/><rect x="25.1" y="229.9" width="2.8" height="2.8" fill="#fff" stroke="#555" stroke-width=".9"/><path d="M13.6 214.4L14.8 232L18.6 228.2L22 235.2L25.2 233.6L21.8 226.8L27.2 226.2Z" fill="#fff" stroke="#151515" stroke-width="1.1" stroke-linejoin="round"/><path d="M14.399999999999999 246.2H29.2V264.79999999999995H13.7Q10.799999999999999 264.79999999999995 10.799999999999999 261.79999999999995Z" fill="url(#sg)" stroke="#9a9a9a" stroke-width=".9"/><rect x="10.799999999999999" y="245.7" width="3.8" height="16.4" rx="1.2" fill="#efefef" stroke="#9a9a9a" stroke-width=".9"/><path d="M22.6 247.6L27.2 252.2H24.6V255H20.6V252.2H18Z" fill="#4f87c6" stroke="#3f73ae" stroke-width=".5"/><path d="M14.6 258.2L18.4 254.6V256.6H20.6V259.8H18.4V261.8Z" fill="#4f87c6"/><rect x="26.6" y="257" width="2.6" height="3.2" fill="#4f87c6"/><rect x="21.4" y="262" width="3.2" height="2.6" fill="#4f87c6"/><rect x="15.4" y="251" width="1.8" height="2.2" fill="#7aa6d6"/><path d="M16 278.6L28.4 284.7M16 278.6L12 293.5" stroke="#111" stroke-width="1.1"/><path d="M27.6 286L21.5 291.5" stroke="#8a8a8a" stroke-width="2.6" stroke-linecap="round"/><path d="M18.5 292L22.8 287.6Q24.2 286.4 25 287.4" fill="none" stroke="#c9b59a" stroke-width="2.2" stroke-linecap="round"/><path d="M21 293.5L24.5 290.5" stroke="#f2a51c" stroke-width="2.4"/><circle cx="16" cy="278.6" r="2.6" fill="#3b7fe0"/><circle cx="28.4" cy="284.7" r="2.6" fill="#3b7fe0"/><rect x="4.5" y="305.5" width="31" height="30" rx="3" fill="#dcdcdc" stroke="#bfbfbf"/><path d="M14.2 310.2H29.1V328.99999999999994H13.5Q10.6 328.99999999999994 10.6 325.99999999999994Z" fill="url(#sg)" stroke="#9a9a9a" stroke-width=".9"/><rect x="10.6" y="309.7" width="3.8" height="16.599999999999998" rx="1.2" fill="#efefef" stroke="#9a9a9a" stroke-width=".9"/><rect x="22.9" y="323" width="9.2" height="9" rx="1.7" fill="#5c965c" stroke="#4b834b" stroke-width=".7"/><path d="M27.5 324.1v6.8M24.099999999999998 327.5h6.8" stroke="#fff" stroke-width="2"/><path d="M13.6 345.5L27.8 346.8L29.2 357.6L9.4 352.8Z" fill="#dadada" stroke="#b4b4b4" stroke-width=".8"/><path d="M18.4 346L16 354.4M23 346.4L22.6 356M12.2 348.6L28.2 350.4M10.8 350.8L28.8 354" stroke="#bcbcbc" stroke-width=".8"/><rect x="22.9" y="355" width="9.2" height="9" rx="1.7" fill="#5c965c" stroke="#4b834b" stroke-width=".7"/><path d="M27.5 356.1v6.8M24.099999999999998 359.5h6.8" stroke="#fff" stroke-width="2"/><rect x="10.1" y="377.1" width="19.6" height="13.5" fill="#3f9fe9"/><path d="M10.1 390.6V383.4L16.4 380.2L29.7 384.6V390.6Z" fill="#cbaa3e"/><path d="M10.1 389.4H29.7V390.8H10.1Z" fill="#8a7a3a"/><rect x="22.9" y="387.2" width="9.2" height="9" rx="1.7" fill="#5c965c" stroke="#4b834b" stroke-width=".7"/><path d="M27.5 388.3v6.8M24.099999999999998 391.7h6.8" stroke="#fff" stroke-width="2"/><rect x="10.5" y="409.4" width="19" height="13.2" fill="#f5f5f5" stroke="#a9a9a9" stroke-width=".9"/><text x="20" y="420.6" text-anchor="middle" font-family="Liberation Sans, sans-serif" font-size="12" fill="#555">T</text><rect x="22.9" y="419" width="9.2" height="9" rx="1.7" fill="#5c965c" stroke="#4b834b" stroke-width=".7"/><path d="M27.5 420.1v6.8M24.099999999999998 423.5h6.8" stroke="#fff" stroke-width="2"/><rect x="11" y="439.3" width="4.8" height="4.4" rx=".8" fill="#fcc61a" stroke="#e2a800" stroke-width=".6"/><rect x="11" y="445.4" width="4.8" height="4.2" rx=".8" fill="#e9511b" stroke="#c43f10" stroke-width=".6"/><rect x="11" y="451.4" width="4.8" height="4.2" rx=".8" fill="#1d9d4e" stroke="#12803b" stroke-width=".6"/><path d="M17.4 442.8H23M17.4 448.8H26M17.4 454.9H20.8" stroke="#9a9a9a" stroke-width="1.6"/><rect x="22.9" y="451.2" width="9.2" height="9" rx="1.7" fill="#5c965c" stroke="#4b834b" stroke-width=".7"/><path d="M27.5 452.3v6.8M24.099999999999998 455.7h6.8" stroke="#fff" stroke-width="2"/><rect x="9.6" y="477.4" width="21" height="3.3" rx=".8" fill="#fff" stroke="#4e4e4e" stroke-width="1.2"/><path d="M10.6 479.05H14.5M19.4 479.05H23M27 479.05H29.6" stroke="#8c8c8c" stroke-width="1.8"/><rect x="22.9" y="483.2" width="9.2" height="9" rx="1.7" fill="#5c965c" stroke="#4b834b" stroke-width=".7"/><path d="M27.5 484.3v6.8M24.099999999999998 487.7h6.8" stroke="#fff" stroke-width="2"/><rect x="10.6" y="510.4" width="11.6" height="10" fill="#cfe4f8" stroke="#8db1d8" stroke-width=".9"/><circle cx="24" cy="513.2" r="5.6" fill="#f6b6b2" stroke="#d98f8c" stroke-width=".8"/><path d="M18.3 501.8L25 513.2H12.4Z" fill="#bdf1b6" stroke="#8fc78a" stroke-width=".9" stroke-linejoin="round"/><rect x="22.9" y="515.2" width="9.2" height="9" rx="1.7" fill="#5c965c" stroke="#4b834b" stroke-width=".7"/><path d="M27.5 516.3000000000001v6.8M24.099999999999998 519.7h6.8" stroke="#fff" stroke-width="2"/><path d="M25.4 518.6h8l-4 4.4z" fill="#1c1c1c"/><path d="M11.8 552.4L26.2 538" stroke="#444" stroke-width="1.1"/><rect x="10.3" y="551.2" width="2.6" height="2.6" fill="#222"/><path d="M29.6 534.8L27.6 540.6L23.8 536.8Z" fill="#fff" stroke="#444" stroke-width="1" stroke-linejoin="round"/><rect x="22.9" y="547" width="9.2" height="9" rx="1.7" fill="#5c965c" stroke="#4b834b" stroke-width=".7"/><path d="M27.5 548.1v6.8M24.099999999999998 551.5h6.8" stroke="#fff" stroke-width="2"/><path d="M16.4 566.7L28.6 573M16.4 566.7L11.5 584" stroke="#111" stroke-width="1.2"/><path d="M11.5 584L28.6 573" stroke="#111" stroke-width="1.1" stroke-dasharray="1.4 1.6"/><circle cx="16.4" cy="566.7" r="2.6" fill="#3b7fe0"/><circle cx="28.6" cy="573" r="2.6" fill="#3b7fe0"/><circle cx="11.5" cy="584" r="2.6" fill="#3b7fe0"/><rect x="22.9" y="579" width="9.2" height="9" rx="1.7" fill="#5c965c" stroke="#4b834b" stroke-width=".7"/><path d="M27.5 580.1v6.8M24.099999999999998 583.5h6.8" stroke="#fff" stroke-width="2"/><path d="M25.4 582.4h8l-4 4.4z" fill="#1c1c1c"/><rect x="10.6" y="598.6" width="19.2" height="18.6" fill="#f6f6f6" stroke="#9a9a9a" stroke-width=".9"/><path d="M12.4 602H16M12.4 605H17M12.4 608H18M12.4 611H19.6M12.4 614H21" stroke="#5b8ac0" stroke-width="1.5"/><path d="M20.4 601.2L17.4 604.4L20.4 607.6M25.4 601.2L28.2 604.4L25.4 607.6M24 600.6L21.8 608.2" fill="none" stroke="#222" stroke-width="1"/><rect x="22.9" y="611" width="9.2" height="9" rx="1.7" fill="#5c965c" stroke="#4b834b" stroke-width=".7"/><path d="M27.5 612.1v6.8M24.099999999999998 615.5h6.8" stroke="#fff" stroke-width="2"/><rect x="10.6" y="630.4" width="19.2" height="18.8" fill="#dcebfa" stroke="#7ba6d4" stroke-width=".9"/><rect x="11" y="630.8" width="18.4" height="4" fill="#c2dbf5"/><path d="M12.6 633H16.4M18.6 633H27" stroke="#4f87c6" stroke-width="1.6"/><path d="M10.6 635H29.8" stroke="#7ba6d4" stroke-width=".8"/><path d="M12.6 638.4H16.4M18.6 638.4H27M12.6 641.6H16.4M18.6 641.6H27M12.6 644.8H16.4M18.6 644.8H22M12.6 647.6H16.4" stroke="#a6a6a6" stroke-width="1"/><rect x="22.9" y="642.4" width="9.2" height="9" rx="1.7" fill="#5c965c" stroke="#4b834b" stroke-width=".7"/><path d="M27.5 643.5v6.8M24.099999999999998 646.9h6.8" stroke="#fff" stroke-width="2"/></svg>
<div class="red" style="left:-5px;top:293px;width:61px;height:53px"></div>
<style>
.lb{position:absolute;font-size:12.8px;line-height:16px;white-space:nowrap;color:#000}
.bh{position:absolute;font-size:13.3px;font-weight:700;line-height:16px;white-space:nowrap;color:#000}
.pt{position:absolute;font-size:14.4px;line-height:18px;white-space:nowrap;color:#000}
.gb{position:absolute;border:1px solid #dcdcdc;border-radius:3px;background:#ebebeb}
.sp{position:absolute;border:1px solid #bdbdbd;border-radius:3px;background:#fff;font-size:12.8px;line-height:16px;white-space:nowrap;overflow:hidden}
.sp span{position:absolute;left:5px;top:50%;margin-top:-7px}
.sp i{position:absolute;right:0;top:0;bottom:0;width:17px;border-left:1px solid #c6c6c6;background:linear-gradient(#f8f8f8,#ececec)}
.sp i:before,.sp i:after{content:"";position:absolute;left:3px;border-left:5px solid transparent;border-right:5px solid transparent}
.sp i:before{top:50%;margin-top:-6.5px;border-bottom:5.5px solid #505050}
.sp i:after{top:50%;margin-top:1.5px;border-top:5.5px solid #505050}
.sp.dd i:after{border-top-color:#aaa}
.cb{position:absolute;border:1px solid #bfbfbf;border-radius:3px;background:linear-gradient(#f7f7f7,#e8e8e8);font-size:12.8px;line-height:16px;white-space:nowrap}
.cb span{position:absolute;left:5px;top:50%;margin-top:-7.2px}
.cb:after{content:"";position:absolute;right:10.5px;top:50%;margin-top:-2.5px;border-left:5px solid transparent;border-right:5px solid transparent;border-top:5.5px solid #505050}
.ck{position:absolute;width:17px;height:17px;border:1px solid #b9b9b9;border-radius:2px;background:#fff}
.tri{position:absolute;width:0;height:0;border-left:5.5px solid transparent;border-right:5.5px solid transparent;border-top:7px solid #333}
</style>
<div class="abs" style="left:1523px;top:129px;width:380px;height:869px;background:#f0f0f0"></div>
<div class="abs" style="left:1522px;top:135px;width:1.4px;height:1.4px;background:#8a8a8a"></div><div class="abs" style="left:1522px;top:142px;width:1.4px;height:1.4px;background:#8a8a8a"></div>
<div class="pt" style="left:1534.5px;top:132px">Elementos</div>
<svg class="abs" style="left:1892px;top:134px" width="11" height="11" viewBox="0 0 11 11"><rect x="0.5" y="0.5" width="13" height="10" rx="2" fill="none" stroke="#777"/><rect x="2.5" y="4.5" width="4" height="4" fill="none" stroke="#555"/><path d="M4.5 4.5V2.5H8.5V6.5H6.5" fill="none" stroke="#555"/></svg>
<div class="abs" style="left:1530px;top:149px;width:380px;height:185px;border:1px solid #c2c2c2;background:#fff"></div>
<div class="abs" style="left:1531px;top:150px;width:372px;height:24px;background:linear-gradient(#fff,#f0f0f0);border-bottom:1px solid #c8c8c8"></div>
<div class="abs" style="left:1573px;top:150px;width:1px;height:23px;background:#d9d9d9"></div>
<div class="abs" style="left:1616px;top:150px;width:1px;height:23px;background:#d9d9d9"></div>
<div class="lb" style="left:1619px;top:153px">Elemento</div>
<svg class="abs" style="left:1533px;top:154px" width="22" height="16" viewBox="0 0 22 16"><path d="M1 8.5C5 2.5 13 1.5 20 8.5C14 14.5 6 14.5 1 8.5Z" fill="#f4f4f4" stroke="#8a8a8a" stroke-width="0.9"/><path d="M2 5C6 1.5 12 1 17 4" fill="none" stroke="#aaa" stroke-width="0.8"/><circle cx="10" cy="8" r="4.2" fill="#b5b5b5" stroke="#777" stroke-width="0.8"/><circle cx="10" cy="8" r="2" fill="#333"/><circle cx="10.8" cy="7.2" r="0.7" fill="#fff"/></svg>
<svg class="abs" style="left:1577px;top:152px" width="17" height="20" viewBox="0 0 17 20"><path d="M4 10V6.5a4.5 4.5 0 0 1 9 0V10" fill="none" stroke="#8f8f8f" stroke-width="2.2"/><path d="M4 10V6.5a4.5 4.5 0 0 1 9 0V10" fill="none" stroke="#e6e6e6" stroke-width="0.8"/><rect x="1" y="9.5" width="15" height="10" rx="1.5" fill="#666"/></svg>
<div class="abs" style="left:1718px;top:337px;width:17px;height:2px;background-image:radial-gradient(circle,#bdbdbd 0.6px,transparent 0.9px);background-size:3px 2px"></div>
<div class="abs" style="left:1598px;top:370px;width:305px;height:1px;background:#c6c6c6"></div>
<div class="abs" style="left:1598px;top:343px;width:61px;height:27px;border:1px solid #c9c9c9;border-bottom:none;border-radius:3px 3px 0 0;background:linear-gradient(#dcdcdc,#e3e3e3)"></div>
<div class="abs" style="left:1530px;top:341px;width:69px;height:30px;border:1px solid #c4c4c4;border-bottom:none;border-radius:4px 4px 0 0;background:linear-gradient(#fafafa,#f0f0f0)"></div>
<div class="lb" style="left:1545px;top:349.5px;font-size:12.2px">Diseño</div>
<div class="lb" style="left:1613px;top:350.5px;font-size:12.2px">Guías</div>
<div class="pt" style="left:1534.5px;top:374px">Diseño</div>
<svg class="abs" style="left:1892px;top:376px" width="11" height="11" viewBox="0 0 11 11"><rect x="0.5" y="0.5" width="13" height="10" rx="2" fill="none" stroke="#777"/><rect x="2.5" y="4.5" width="4" height="4" fill="none" stroke="#555"/><path d="M4.5 4.5V2.5H8.5V6.5H6.5" fill="none" stroke="#555"/></svg>
<div class="tri" style="left:1544px;top:409px"></div>
<div class="bh" style="left:1563px;top:404.3px">Configuración general</div>
<div class="gb" style="left:1542px;top:423px;width:350px;height:55px"></div>
<div class="lb" style="left:1555px;top:442px">Mapa de referencia</div>
<div class="cb" style="left:1672px;top:436px;width:206px;height:27px"><span></span></div>
<div class="tri" style="left:1544px;top:491px"></div>
<div class="bh" style="left:1563px;top:486.3px">Guías y cuadrícula</div>
<div class="gb" style="left:1542px;top:505px;width:350px;height:210px"></div>
<div class="lb" style="left:1555px;top:518.5px">Espaciado de cuadrícula</div>
<div class="sp" style="left:1555px;top:541px;width:159px;height:23px"><span>10,00</span><i></i></div>
<div class="cb" style="left:1720px;top:540px;width:158px;height:24px"><span>mm</span></div>
<div class="lb" style="left:1555px;top:572px">Desplazamiento de cuadrícula</div>
<div class="sp dd" style="left:1555px;top:594px;width:159px;height:23px"><span>x: 0,00</span><i></i></div>
<div class="sp dd" style="left:1555px;top:625px;width:159px;height:23px"><span>y: 0,00</span><i></i></div>
<div class="cb" style="left:1720px;top:609px;width:158px;height:24px"><span>mm</span></div>
<div class="lb" style="left:1555px;top:656px">Tolerancia de autoensamblado</div>
<div class="sp" style="left:1555px;top:678px;width:323px;height:23px"><span>5 px</span><i></i></div>
<div class="tri" style="left:1544px;top:728.5px"></div>
<div class="bh" style="left:1563px;top:723.8px">Configuración de exportación</div>
<div class="gb" style="left:1542px;top:743px;width:350px;height:136px"></div>
<div class="lb" style="left:1555px;top:761.5px">Resolución de exportación</div>
<div class="sp" style="left:1720px;top:757px;width:158px;height:23px"><span>300.ppp</span><i></i></div>
<div class="ck" style="left:1555px;top:789.5px"></div>
<div class="lb" style="left:1578px;top:790.5px">Imprimir como ráster</div>
<div class="ck" style="left:1555px;top:817.5px"></div>
<div class="lb" style="left:1578px;top:818.5px">Exportar siempre como vectoriales</div>
<div class="ck" style="left:1555px;top:845px"></div>
<div class="lb" style="left:1578px;top:846.5px">Guardas archivo de georreferenciación</div>
<div class="tri" style="left:1544px;top:891.5px"></div>
<div class="bh" style="left:1563px;top:886.8px"><span style="letter-spacing:.12px">Ajustar tamaño de la composición al contenido</span></div>
<div class="abs" style="left:1523px;top:906px;width:380px;height:92px;overflow:hidden"><div class="gb" style="left:19px;top:0;width:350px;height:140px"></div></div>
<div class="lb" style="left:1555px;top:923.5px">Unidades del margen</div>
<div class="cb" style="left:1682px;top:919px;width:196px;height:24px"><span>mm</span></div>
<div class="lb" style="left:1615px;top:955px">Margen superior</div>
<div class="sp dd" style="left:1720px;top:951px;width:98px;height:22.5px"><span>0,00</span><i></i></div>
<div class="abs" style="left:1523px;top:975px;width:380px;height:23px;overflow:hidden">
<div class="lb" style="left:32px;top:10.5px">Izquierda</div>
<div class="sp dd" style="left:98px;top:6.5px;width:93px;height:23px"><span>0,00</span><i></i></div>
<div class="lb" style="left:197px;top:10.5px">Derecha</div>
<div class="sp dd" style="left:262.5px;top:6.5px;width:93px;height:23px"><span>0,00</span><i></i></div>
</div>
<div class="abs" style="left:0;top:999px;width:1903px;height:29px;background:#f0f0f0"></div>
<div class="lb" style="left:1255px;top:1007px;font-size:13.1px">x: 17.881 mm</div>
<div class="lb" style="left:1361px;top:1007px;font-size:13.1px">y: 16.6687 mm</div>
<div class="lb" style="left:1467px;top:1007px;font-size:13.1px">página: 1</div>
<div class="abs" style="left:1573px;top:1003px;width:239px;height:22px;border:1px solid #bdbdbd;border-radius:3px;background:#fff"><div class="lb" style="left:4px;top:2.5px">69.8%</div><div class="abs" style="right:0;top:0;width:24px;height:20px;background:linear-gradient(#f7f7f7,#e8e8e8);border-radius:0 3px 3px 0"></div><div class="abs" style="right:9px;top:8px;border-left:4.5px solid transparent;border-right:4.5px solid transparent;border-top:5px solid #555"></div></div>
<div class="abs" style="left:1820px;top:1012px;width:90px;height:5px;border:1px solid #bdbdbd;border-radius:2px;background:#e4e4e4"></div>
<div class="abs" style="left:1825px;top:1006px;width:16px;height:17px;border:1px solid #b0b0b0;border-radius:3px;background:linear-gradient(#fdfdfd,#ececec)"></div>
<style>
#dwrap{left:689px;top:336px;width:555px;height:343px;background:#fff;overflow:hidden}
#dlg{left:8px;top:14px;width:527px;height:317px;border:1px solid #4b86b9;background:#f0f0f0;box-shadow:inset 0 0 0 1px #d3eefa,0 3px 20px rgba(0,0,0,.34),0 0 4px rgba(0,0,0,.16)}
#dtitle{left:1px;top:1px;width:523px;height:36px;background:#fff}
.dl{position:absolute;font-size:12.5px;line-height:16px;white-space:nowrap;color:#000}
.dh{position:absolute;font-size:13.2px;font-weight:700;line-height:16px;white-space:nowrap;color:#000}
.rb{position:absolute;width:15px;height:15px;border:1px solid #9a9a9a;border-radius:50%;background:#fff}
.rb.on:after{content:"";position:absolute;left:3.5px;top:3.5px;width:6px;height:6px;border-radius:50%;background:#333}
.btn{position:absolute;height:25px;border:1px solid #adadad;border-radius:3px;background:linear-gradient(#f4f4f4,#e6e6e6);font-size:12.8px;line-height:24.5px;text-align:center}
</style>
<div class="abs" id="dwrap"><div class="abs" id="dlg"><div class="abs" id="dtitle"></div></div></div>
<div class="red" style="left:684px;top:331px;width:565px;height:353px"></div>
<svg class="abs" style="left:705.6px;top:357.4px" width="23.2" height="23.2" viewBox="0 0 24 24"><defs><linearGradient id="qg2" x1="0" y1="0" x2="0" y2="1"><stop offset="0" stop-color="#93b32e"/><stop offset="1" stop-color="#579a2f"/></linearGradient></defs><circle cx="11.7" cy="11.75" r="7.55" fill="none" stroke="url(#qg2)" stroke-width="3.9"/><path d="M10 10L14.8 12L21.3 18.8V20.5L18.4 21.3L12 14.8Z" fill="#5d9b30" stroke="#d6f3ae" stroke-width=".8" stroke-linejoin="round"/><path d="M13.4 11.4L14.9 12.3L12.3 14.9L11.4 13.4Z" fill="#f4d262"/><path d="M9.9 9.9L13.5 11.3L11.3 13.5Z" fill="#e67f22"/></svg>
<div class="abs" style="left:732px;top:360px;font-size:14.95px;line-height:20px;white-space:nowrap;color:#000">Propiedades del elemento nuevo</div>
<svg class="abs" style="left:1195px;top:363px" width="14" height="14" viewBox="0 0 14 14"><path d="M1 1L13 13M13 1L1 13" stroke="#222" stroke-width="1.3"/></svg>
<div class="dh" style="left:713px;top:403.8px;letter-spacing:.05px">Posición y tamaño</div>
<div class="dh" style="left:1039px;top:403.8px;letter-spacing:.28px">Punto de referencia</div>
<div class="gb" style="left:712px;top:422px;width:318px;height:175px"></div>
<div class="gb" style="left:1038px;top:422px;width:172px;height:175px"></div>
<div class="dl" style="left:725px;top:439.5px">Página</div>
<div class="sp dd" style="left:793px;top:436px;width:100px;height:22px;font-size:12.5px"><span>1</span><i></i></div>
<div class="dl" style="left:725px;top:470.5px">X</div>
<div class="sp" style="left:793px;top:467px;width:155px;height:22px;font-size:12.5px"><span>17,881</span><i></i></div>
<div class="dl" style="left:725px;top:501.5px">Y</div>
<div class="sp" style="left:793px;top:498px;width:155px;height:22px;font-size:12.5px"><span>16,669</span><i></i></div>
<div class="dl" style="left:725px;top:532.5px">Anchura</div>
<div class="sp" style="left:793px;top:529px;width:122px;height:22px;font-size:12.5px"><span>283,446</span><i></i></div>
<div class="dl" style="left:725px;top:563.5px">Altura</div>
<div class="sp" style="left:793px;top:560px;width:122px;height:22px;font-size:12.5px"><span>199,208</span><i></i></div>
<div class="cb" style="left:955px;top:481px;width:61px;height:23.5px;font-size:12.5px"><span>mm</span></div>
<div class="cb" style="left:955px;top:543px;width:61px;height:23.5px;font-size:12.5px"><span>mm</span></div>
<svg class="abs" style="left:928px;top:533px" width="16" height="45" viewBox="0 0 16 45"><path d="M1.3 1.5H8.3V9M8.3 35V43H1.3" fill="none" stroke="#777" stroke-width="1.5"/><rect x="2.3" y="21.7" width="11.6" height="7.8" rx="1.6" fill="#555"/><path d="M7.2 21.5V19.2a3.1 3.1 0 0 1 6.2 0V20" fill="none" stroke="#888" stroke-width="1.5"/></svg>
<div class="rb on" style="left:1092.0px;top:476.2px"></div>
<div class="rb" style="left:1116.2px;top:476.2px"></div>
<div class="rb" style="left:1140.5px;top:476.2px"></div>
<div class="rb" style="left:1092.0px;top:501.3px"></div>
<div class="rb" style="left:1116.2px;top:501.3px"></div>
<div class="rb" style="left:1140.5px;top:501.3px"></div>
<div class="rb" style="left:1092.0px;top:526.2px"></div>
<div class="rb" style="left:1116.2px;top:526.2px"></div>
<div class="rb" style="left:1140.5px;top:526.2px"></div>
<div class="btn" style="left:1043px;top:628px;width:80px;border-color:#3c7fc0;box-shadow:inset 0 0 0 1px #c5dcf2">Aceptar</div>
<div class="btn" style="left:1130px;top:628px;width:80px">Cancelar</div>
</div>
</body>
</html>
